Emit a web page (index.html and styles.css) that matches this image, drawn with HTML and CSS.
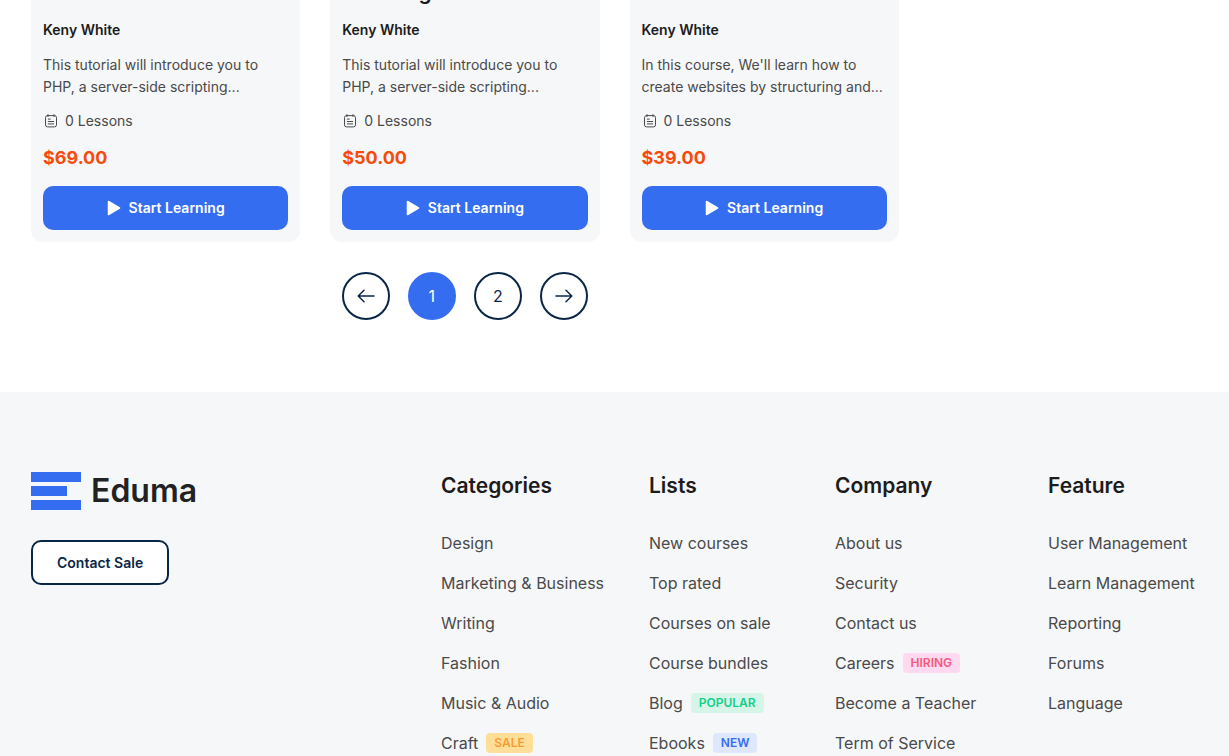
FILE: index.html
```html
<!DOCTYPE html>
<html lang="en">
<head>
<meta charset="utf-8">
<meta name="viewport" content="width=device-width, initial-scale=1">
<title>Eduma – Courses</title>
<link rel="stylesheet" href="styles.css">
</head>
<body>
<svg class="sprite" aria-hidden="true">
  <symbol id="lessons" viewBox="0 0 14 14"><path d="M3.500 1.600h7a2 2 0 0 1 2 2v7.300a2 2 0 0 1-2 2h-7a2 2 0 0 1-2-2V3.600a2 2 0 0 1 2-2M4 .6v1.900M10 .6v1.900M4.300 5.100h2M4.300 7.500h5.400M4.300 9.900h5.400" fill="none" stroke="currentColor" stroke-width="1" stroke-linecap="round"/></symbol>
  <symbol id="play" viewBox="0 0 14 16"><path d="M1.500 1.500 12.500 8 1.500 14.500z" fill="currentColor" stroke="currentColor" stroke-width="1.500" stroke-linejoin="round"/></symbol>
  <symbol id="arrow" viewBox="0 0 18 14"><path d="M1 7h15.500M11 1.300 16.800 7 11 12.700" fill="none" stroke="currentColor" stroke-width="1.500" stroke-linecap="round" stroke-linejoin="round"/></symbol>
</svg>
<main class="container page">
  <section class="courses">
    <article class="card">
      <h3 class="card-title">PHP Course</h3>
      <p class="author">Keny White</p>
      <p class="excerpt">This tutorial will introduce you to PHP, a server-side scripting...</p>
      <p class="meta"><svg class="icon-lessons"><use href="#lessons"/></svg>0 Lessons</p>
      <p class="price">$69.00</p>
      <button class="start" type="button"><svg class="icon-play"><use href="#play"/></svg>Start Learning</button>
    </article>
    <article class="card">
      <h3 class="card-title">Learning PHP</h3>
      <p class="author">Keny White</p>
      <p class="excerpt">This tutorial will introduce you to PHP, a server-side scripting...</p>
      <p class="meta"><svg class="icon-lessons"><use href="#lessons"/></svg>0 Lessons</p>
      <p class="price">$50.00</p>
      <button class="start" type="button"><svg class="icon-play"><use href="#play"/></svg>Start Learning</button>
    </article>
    <article class="card">
      <h3 class="card-title">How to Create Websites</h3>
      <p class="author">Keny White</p>
      <p class="excerpt">In this course, We'll learn how to create websites by structuring and...</p>
      <p class="meta"><svg class="icon-lessons"><use href="#lessons"/></svg>0 Lessons</p>
      <p class="price">$39.00</p>
      <button class="start" type="button"><svg class="icon-play"><use href="#play"/></svg>Start Learning</button>
    </article>
    <nav class="pagination" aria-label="Pages">
      <a class="page-link" href="#prev" aria-label="Previous"><svg class="icon-arrow flip"><use href="#arrow"/></svg></a>
      <a class="page-link current" href="#1" aria-current="page">1</a>
      <a class="page-link" href="#2">2</a>
      <a class="page-link" href="#next" aria-label="Next"><svg class="icon-arrow"><use href="#arrow"/></svg></a>
    </nav>
  </section>
</main>
<footer class="footer">
  <div class="container footer-grid">
    <div class="brand">
      <a class="logo" href="#home"><svg class="logo-mark" viewBox="0 0 50 38" aria-hidden="true"><path d="M0 0h50v10H0zM0 14h36v10H0zM0 28h50v10H0z" fill="#356df1"/></svg>Eduma</a>
      <a class="contact" href="#contact">Contact Sale</a>
    </div>
    <nav aria-labelledby="f1">
      <h2 class="heading" id="f1">Categories</h2>
      <ul class="links">
        <li><a href="#">Design</a></li>
        <li><a href="#">Marketing &amp; Business</a></li>
        <li><a href="#">Writing</a></li>
        <li><a href="#">Fashion</a></li>
        <li><a href="#">Music &amp; Audio</a></li>
        <li><a href="#">Craft</a><span class="tag sale">SALE</span></li>
      </ul>
    </nav>
    <nav aria-labelledby="f2">
      <h2 class="heading" id="f2">Lists</h2>
      <ul class="links">
        <li><a href="#">New courses</a></li>
        <li><a href="#">Top rated</a></li>
        <li><a href="#">Courses on sale</a></li>
        <li><a href="#">Course bundles</a></li>
        <li><a href="#">Blog</a><span class="tag popular">POPULAR</span></li>
        <li><a href="#">Ebooks</a><span class="tag new">NEW</span></li>
      </ul>
    </nav>
    <nav aria-labelledby="f3">
      <h2 class="heading" id="f3">Company</h2>
      <ul class="links">
        <li><a href="#">About us</a></li>
        <li><a href="#">Security</a></li>
        <li><a href="#">Contact us</a></li>
        <li><a href="#">Careers</a><span class="tag hiring">HIRING</span></li>
        <li><a href="#">Become a Teacher</a></li>
        <li><a href="#">Term of Service</a></li>
      </ul>
    </nav>
    <nav aria-labelledby="f4">
      <h2 class="heading" id="f4">Feature</h2>
      <ul class="links">
        <li><a href="#">User Management</a></li>
        <li><a href="#">Learn Management</a></li>
        <li><a href="#">Reporting</a></li>
        <li><a href="#">Forums</a></li>
        <li><a href="#">Language</a></li>
      </ul>
    </nav>
  </div>
</footer>
</body>
</html>
```

FILE: styles.css
```css
* { box-sizing: border-box; margin: 0; padding: 0; }
html { overflow: hidden; }
body { background: #fff; color: #4a4a4a; font: 14px/22px Inter, "Liberation Sans", sans-serif; }
a { color: inherit; text-decoration: none; }
.sprite { display: none; }
.container { padding-inline: 31px; }

/* Course grid: three of four page columns */
.page { display: grid; grid-template-columns: repeat(4, 1fr); column-gap: 30px; }
.courses { grid-column: span 3; display: grid; grid-template-columns: subgrid; margin-top: -21px; padding-bottom: 72px; }
.card { display: flex; flex-direction: column; background: #f6f7f9; border-radius: 0 0 12px 12px; padding: 0 12px 12px; }
.card-title { color: #1c1c1c; font-size: 21px; line-height: 25px; font-weight: 600; }
.author { margin-top: 15px; color: #1c1c1c; font-weight: 600; }
.excerpt { margin-top: 13px; }
.meta { display: flex; align-items: center; gap: 7px; margin-top: 12px; }
.icon-lessons { width: 14px; height: 14px; margin-left: 1px; }
.price { margin-top: 12px; color: #f74a0b; font-size: 18px; line-height: 28px; font-weight: 700; }
.start { display: flex; align-items: center; justify-content: center; gap: 8px; height: 44px; margin-top: 14px; border: 0; border-radius: 10px; background: #356df1; color: #fff; font: inherit; font-weight: 600; cursor: pointer; }
.icon-play { width: 14px; height: 16px; }

.pagination { grid-column: 1 / -1; display: flex; justify-content: center; gap: 18px; margin-top: 30px; }
.page-link { display: grid; place-items: center; width: 48px; height: 48px; border: 2px solid #0a2647; border-radius: 50%; color: #0a2647; font-size: 16px; }
.current { border-color: #356df1; background: #356df1; color: #fff; }
.icon-arrow { width: 18px; height: 14px; }
.flip { transform: rotate(180deg); }

.footer { background: #f6f7f9; padding-block: 80px; }
.footer-grid { display: grid; grid-template-columns: 410fr 208fr 186fr 213fr 150fr; }
.brand { display: flex; flex-direction: column; align-items: flex-start; gap: 30px; }
.logo { display: flex; align-items: center; gap: 10px; color: #222; font-size: 32px; line-height: 38px; font-weight: 600; }
.logo-mark { width: 50px; height: 38px; }
.contact { border: 2px solid #0a2647; border-radius: 10px; background: #fff; padding: 10px 24px; color: #0a2647; font-weight: 600; line-height: 21px; }
.heading { color: #1c1c1c; font-size: 21px; line-height: 28px; font-weight: 600; }
.links { display: grid; gap: 16px; margin-top: 31px; list-style: none; font-size: 16px; line-height: 24px; white-space: nowrap; }
.links li { display: flex; align-items: center; gap: 8px; }
.tag { border-radius: 4px; padding: 0 8px; font-size: 12px; line-height: 20px; font-weight: 600; }
.sale { background: #ffdf98; color: #f99b35; }
.popular { background: #d6f5e8; color: #12cf8c; }
.new { background: #dfe7fd; color: #356df1; }
.hiring { background: #ffd9ef; color: #f4587f; }
```
